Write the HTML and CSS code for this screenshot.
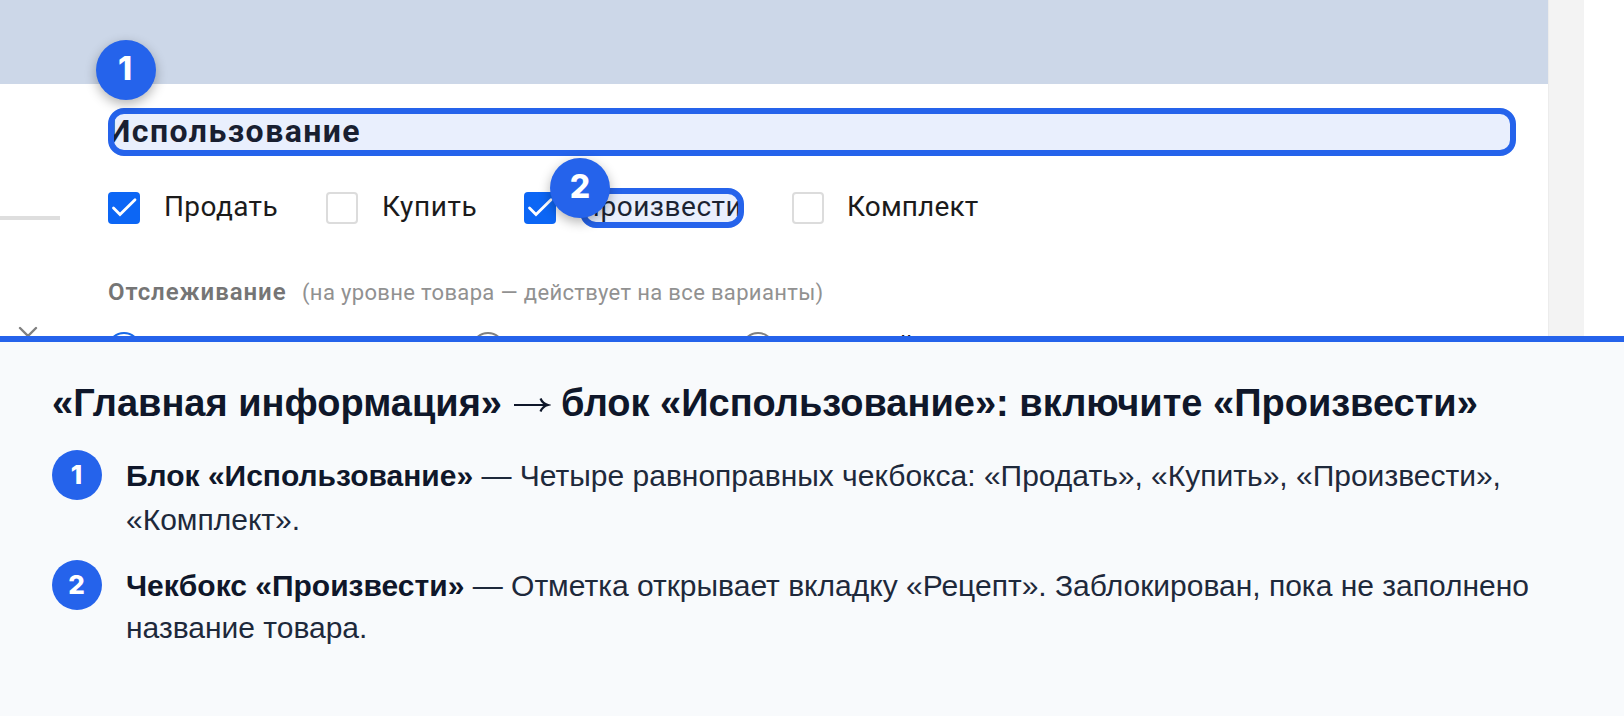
FILE: index.html
```html
<!DOCTYPE html>
<html lang="ru">
<head>
<meta charset="utf-8">
<title>Использование</title>
<link rel="stylesheet" href="styles.css">
</head>
<body>
<main class="shot">
  <section class="app">
    <aside class="side">
      <div class="side-line"></div>
      <svg class="side-close" width="20" height="20" viewBox="0 0 20 20"><path d="M2 2l16 16M18 2L2 18"/></svg>
    </aside>
    <div class="card">
      <div class="band"></div>
      <div class="content">
        <div class="heading"><span class="heading-text">Использование</span><span class="frame"></span><span class="pin pin-first">1</span></div>
        <div class="checks">
          <span class="box on"><svg width="32" height="32" viewBox="0 0 32 32"><path d="M5.500 16l6.500 6.500L27 7.700"/></svg></span>
          <span class="check-text sell">Продать</span>
          <span class="box"></span>
          <span class="check-text buy">Купить</span>
          <span class="box on"><svg width="32" height="32" viewBox="0 0 32 32"><path d="M5.500 16l6.500 6.500L27 7.700"/></svg></span>
          <span class="check-text make">Произвести<span class="frame"></span><span class="pin pin-second">2</span></span>
          <span class="box"></span>
          <span class="check-text kit">Комплект</span>
        </div>
        <div class="track"><b class="track-name">Отслеживание</b><span class="track-note">(на уровне товара — действует на все варианты)</span></div>
        <div class="radios">
          <span class="radio active"></span>
          <span class="radio second"></span>
          <span class="radio third"></span>
          <span class="radio-text">й</span>
        </div>
      </div>
    </div>
    <div class="gutter"></div>
  </section>
  <section class="legend">
    <h1 class="title">«Главная информация» <svg class="arrow" width="38" height="24" viewBox="0 0 38 24"><path d="M1 11H34"/><path d="M27.500 4.500Q29.500 9.500 35 11Q29.500 12.500 27.500 17.500"/></svg> блок «Использование»: включите «Произвести»</h1>
    <div class="item"><span class="num">1</span><p class="note first"><b>Блок «Использование»</b> — Четыре равноправных чекбокса: «Продать», «Купить», «Произвести», «Комплект».</p></div>
    <div class="item"><span class="num">2</span><p class="note second-note"><b>Чекбокс «Произвести»</b> — Отметка открывает вкладку «Рецепт». Заблокирован, пока не заполнено название товара.</p></div>
  </section>
</main>
</body>
</html>
```
FILE: styles.css
```css
* { box-sizing: border-box; }
body { margin: 0; background: #fff; font-family: "Liberation Sans", Arial, sans-serif; }
.shot { width: 1624px; height: 716px; overflow: hidden; display: flex; flex-direction: column; }
.app { height: 336px; flex: none; display: flex; overflow: hidden; position: relative; font-family: Roboto, sans-serif; }
.side { width: 60px; height: 336px; padding-top: 216px; position: absolute; left: 0; top: 0; z-index: 1; overflow: hidden; }
.side-line { height: 4px; background: #dedede; }
.side-close { display: block; margin: 106px 0 0 18px; fill: none; stroke: #808080; stroke-width: 2.4; stroke-linecap: round; }
.card { width: 1548px; flex: none; }
.band { height: 84px; background: #ccd7e8; }
.content { padding: 24px 32px 0 108px; }
.gutter { width: 36px; background: #f3f3f3; border-left: 1px solid #ececec; }
.heading { height: 48px; position: relative; display: flex; align-items: center; }
.heading-text { font-size: 32px; line-height: 44px; padding-bottom: 2px; font-weight: 700; letter-spacing: 1.45px; color: #18181b; }
.frame { position: absolute; inset: 0; border: 6px solid #2563eb; border-radius: 16px; background: rgba(37, 99, 235, .1); }
.pin { position: absolute; width: 60px; height: 60px; border-radius: 50%; background: #2563eb; color: #fff; display: flex; align-items: center; justify-content: center; font: 800 32px/60px Inter, sans-serif; letter-spacing: 0; padding: 0 2px 2px 0; box-shadow: 0 4px 12px rgba(0, 0, 0, .3); z-index: 2; }
.pin-first { left: -12px; top: -68px; }
.pin-second { left: -30px; top: -30px; padding-right: 0; }
.checks { display: flex; align-items: center; height: 40px; margin-top: 32px; }
.box { width: 32px; height: 32px; flex: none; border: 2px solid #dcdcdc; border-radius: 4px; background: #fff; }
.box.on { border: 0; background: #0c66f5; }
.box svg { display: block; fill: none; stroke: #fff; stroke-width: 2.8; stroke-linecap: round; }
.check-text { position: relative; height: 40px; margin-left: 24px; font-size: 28px; line-height: 37px; color: #1b1b1b; white-space: nowrap; }
.sell { width: 162px; letter-spacing: .4px; }
.buy { width: 142px; letter-spacing: .6px; }
.make { width: 164px; margin-right: 48px; letter-spacing: .5px; }
.kit { width: 140px; letter-spacing: .15px; text-indent: -1px; }
.track { display: flex; align-items: baseline; height: 32px; margin-top: 48px; line-height: 32px; white-space: nowrap; }
.track-name { width: 194px; font-size: 24px; font-weight: 600; letter-spacing: .93px; color: #757575; }
.track-note { font-size: 22px; letter-spacing: .34px; color: #919191; }
.radios { display: flex; height: 34px; margin-top: 24px; }
.radio { width: 34px; height: 34px; flex: none; margin-left: -1px; border: 2px solid #808080; border-radius: 50%; }
.radio.active { border-color: #1769e8; }
.radio.second { margin-left: 330px; }
.radio.third { margin-left: 236px; }
.radio-text { font-size: 28px; line-height: 34px; margin: -3px 0 0 123px; color: #1b1b1b; }
.legend { flex: 1; padding: 38px 52px; border-top: 6px solid #2563eb; background: #f8fafc; }
.title { margin: 0 0 24px; height: 46px; font-size: 38px; line-height: 46px; font-weight: 700; color: #0f172a; white-space: nowrap; }
.arrow { vertical-align: -2px; fill: none; stroke: #0f172a; stroke-width: 2.2; }
.item { display: flex; align-items: flex-start; gap: 24px; height: 110px; }
.num { width: 50px; height: 50px; flex: none; padding-right: 1px; border-radius: 50%; background: #2563eb; color: #fff; display: flex; align-items: center; justify-content: center; font: 800 26px/50px Inter, sans-serif; }
.note { margin: 4px 0 0; font-size: 30px; color: #1e293b; }
.note.first { line-height: 44px; }
.note.second-note { line-height: 42px; padding-top: 1px; }
.note b { color: #0f172a; }
```
